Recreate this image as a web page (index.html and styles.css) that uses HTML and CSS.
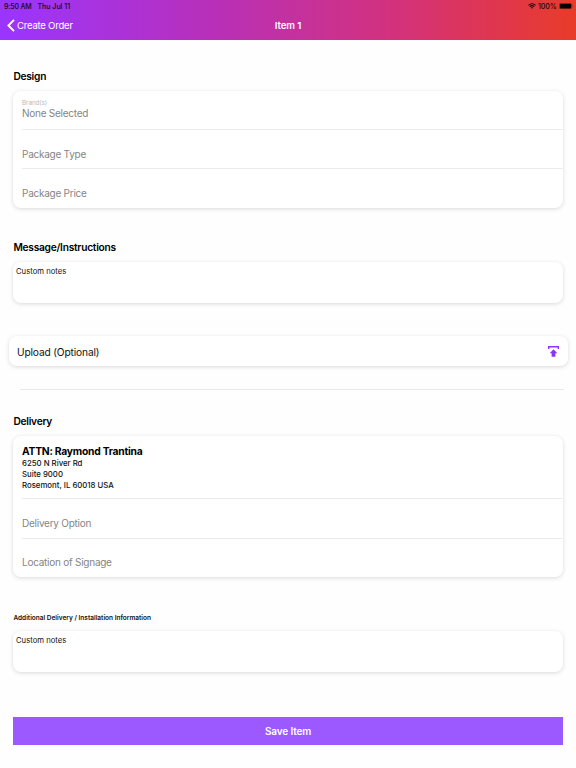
FILE: index.html
```html
<!DOCTYPE html>
<html lang="en">
<head>
    <meta charset="UTF-8">
    <meta name="viewport" content="width=device-width, initial-scale=1.0">
    <title>Item 1</title>
    <link rel="stylesheet" href="styles.css">
</head>
<body>

    <header class="header">
        <div class="status-bar">
            <span class="time">9:50 AM</span>
            <span class="date">Thu Jul 11</span>
            <svg class="wifi" viewBox="0 0 16 12" fill="none" stroke="#160611" stroke-width="2.3">
                <path d="M1 4.6C5 .8 11 .8 15 4.6M3.6 7.3c2.5-2.3 6.3-2.3 8.8 0"/>
                <path d="M5.7 9.2c1.3-1.2 3.3-1.2 4.6 0L8 11.6z" fill="#160611" stroke="none"/>
            </svg>
            <span class="percent">100%</span>
            <svg class="battery" viewBox="0 0 28 12">
                <rect x=".5" y=".5" width="24" height="11" rx="3" fill="none" stroke="#160611" stroke-opacity=".5"/>
                <rect x="1.5" y="1.5" width="22" height="9" rx="1.6" fill="#000"/>
                <path d="M26 4c1.6.5 1.6 3.5 0 4z" fill="#160611" fill-opacity=".5"/>
            </svg>
        </div>
        <nav class="nav">
            <a class="back">
                <svg viewBox="0 0 8 13" fill="none" stroke="#fff" stroke-width="1.9"><path d="M7 .9L1.4 6.5 7 12.1"/></svg>
                Create Order
            </a>
            <h1>Item 1</h1>
        </nav>
    </header>

    <main class="content">
        <h2>Design</h2>
        <section class="card">
            <div class="field selected">
                <label>Brand(s)</label>
                <span>None Selected</span>
            </div>
            <div class="field">Package Type</div>
            <div class="field">Package Price</div>
        </section>

        <h2 class="message-title">Message/Instructions</h2>
        <section class="card notes">Custom notes</section>

        <section class="card upload">
            <span>Upload (Optional)</span>
            <svg viewBox="0 0 11 11" fill="#8a35f5">
                <path d="M0 0h11v2.9H9.6V1.5H1.4v1.4H0z"/>
                <path d="M5.5 3.3L9.3 7.3H7.4v3.5H3.6V7.3H1.7z"/>
            </svg>
        </section>
        <hr class="divider">

        <h2>Delivery</h2>
        <section class="card">
            <div class="address">
                <strong>ATTN: Raymond Trantina</strong>
                <span>6250 N River Rd</span>
                <span>Suite 9000</span>
                <span>Rosemont, IL 60018 USA</span>
            </div>
            <div class="field">Delivery Option</div>
            <div class="field">Location of Signage</div>
        </section>

        <h3>Additional Delivery / Installation Information</h3>
        <section class="card notes">Custom notes</section>

        <button class="save">Save Item</button>
    </main>

</body>
</html>
```

FILE: styles.css
```css
* {
    box-sizing: border-box;
}
body {
    margin: 0;
    font-family: Inter, "Liberation Sans", sans-serif;
    background-color: #fefefe;
    color: #111;
}
/* Header */
.header {
    height: 39.5px;
    background: linear-gradient(to right, #9a35ff 0%, #b530c0 33%, #d43279 70%, #e93b29 100%);
}
.status-bar {
    display: flex;
    align-items: center;
    height: 12px;
    padding: 0 3px 0 4px;
    font-size: 7px;
    font-weight: 500;
    color: #160611;
}
.time {
    width: 33.5px;
    white-space: nowrap;
    letter-spacing: -0.15px;
}
.wifi {
    width: 8px;
    height: 6px;
    margin-left: auto;
}
.percent {
    width: 18px;
    margin: 0 2.5px 0 2.5px;
    letter-spacing: -0.1px;
}
.battery {
    width: 14.5px;
    height: 6.2px;
}
.nav {
    display: grid;
    grid-template-columns: 1fr auto 1fr;
    align-items: center;
    height: 27px;
    padding: 0 7px;
    color: #fff;
}
.back {
    display: flex;
    align-items: center;
    gap: 2px;
    font-size: 9.6px;
    line-height: 12px;
    letter-spacing: -0.25px;
}
.back svg {
    width: 8px;
    height: 13px;
}
h1 {
    margin: 0;
    font-size: 9.6px;
    font-weight: 600;
    letter-spacing: -0.1px;
}
/* Form sections */
.content {
    padding: 29.5px 13px 0;
}
h2 {
    margin: 0 0 7.5px;
    padding-left: 0.4px;
    font-size: 10.2px;
    line-height: 14px;
    font-weight: 600;
    letter-spacing: -0.25px;
    color: #000;
}
.card {
    background-color: #fff;
    border-radius: 8px;
    box-shadow: 0 1px 4px rgba(0, 0, 0, 0.15);
    padding-left: 9px;
}
.field {
    height: 39.5px;
    padding-top: 18px;
    font-size: 10px;
    line-height: 13px;
    letter-spacing: -0.25px;
    color: #858585;
    border-bottom: 1px solid #ececec;
}
.field:last-child {
    height: 38.5px;
    padding-top: 17.5px;
    border-bottom: none;
}
.field label {
    display: block;
    font-size: 6.3px;
    line-height: 8px;
    letter-spacing: -0.05px;
    color: #b9b9b9;
}
.field.selected {
    height: 39px;
    padding-top: 8px;
}
.field.selected span {
    display: block;
}
.message-title {
    margin-top: 32.5px;
}
.notes {
    height: 41px;
    padding: 4px 3px;
    font-size: 7.7px;
    line-height: 11px;
}
.upload {
    display: flex;
    align-items: center;
    justify-content: space-between;
    height: 30px;
    margin: 33.5px -4.5px 0;
    padding: 1px 8.5px 0;
    font-size: 10.2px;
    letter-spacing: -0.15px;
}
.upload svg {
    width: 11px;
    height: 11px;
}
.divider {
    height: 1px;
    margin: 22.5px -1px 24.5px 7px;
    border: none;
    background-color: #e9e9e9;
}
.address {
    display: flex;
    flex-direction: column;
    height: 63.5px;
    padding-top: 8px;
    border-bottom: 1px solid #ececec;
    font-size: 7.8px;
    line-height: 11.2px;
    font-weight: 500;
}
.address strong {
    margin-bottom: 0.5px;
    font-size: 10.3px;
    line-height: 14px;
    font-weight: 700;
    letter-spacing: -0.24px;
    color: #000;
}
h3 {
    margin: 36px 0 8px;
    padding-left: 0.4px;
    font-size: 6.5px;
    line-height: 10px;
    font-weight: 600;
}
.save {
    display: block;
    width: 100%;
    height: 28px;
    margin-top: 44.8px;
    padding: 0;
    border: none;
    background-color: #9b59ff;
    color: #fff;
    font-family: inherit;
    font-size: 10px;
    font-weight: 600;
    letter-spacing: -0.15px;
}
```
